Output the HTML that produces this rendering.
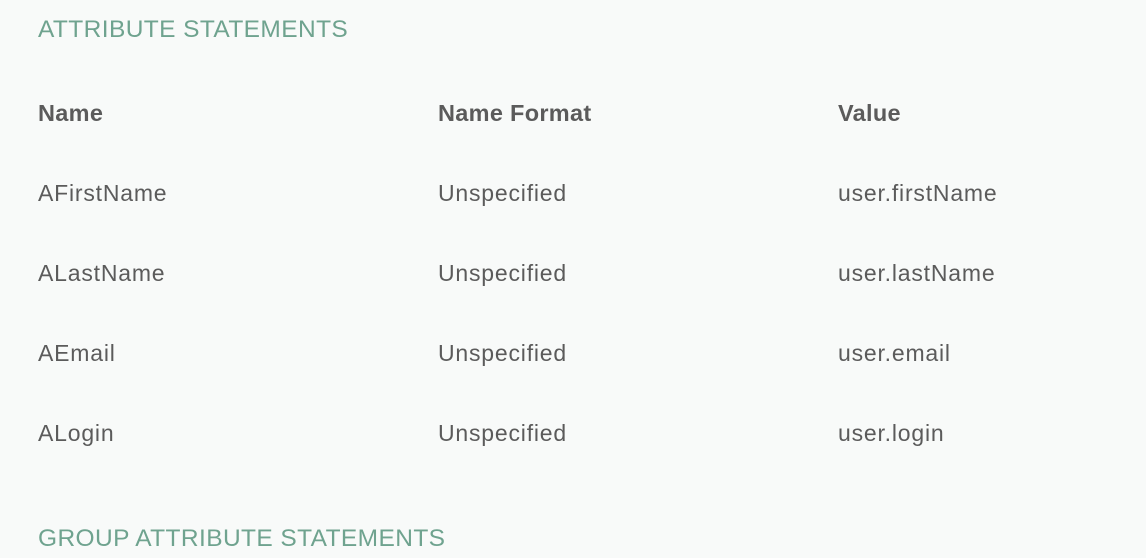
<!DOCTYPE html>
<html><head><meta charset="utf-8"><style>
html,body{margin:0;padding:0;background:#f8faf9;width:1146px;height:558px;overflow:hidden;font-family:"Liberation Sans",sans-serif;}
.h{position:absolute;left:38px;color:#6fa38f;font-size:24.5px;letter-spacing:0.4px;line-height:1;}
.t{position:absolute;font-size:23px;color:#5b5b5b;line-height:1;letter-spacing:0.8px;}
.b{font-weight:bold;font-size:23.5px;letter-spacing:0.3px;}
</style></head><body>
<div class="h" style="top:18px">ATTRIBUTE STATEMENTS</div>
<div class="t b" style="left:38px;top:102px">Name</div>
<div class="t b" style="left:438px;top:102px">Name Format</div>
<div class="t b" style="left:838px;top:102px">Value</div>

<div class="t" style="left:38px;top:182px">AFirstName</div>
<div class="t" style="left:438px;top:182px">Unspecified</div>
<div class="t" style="left:838px;top:182px">user.firstName</div>

<div class="t" style="left:38px;top:262px">ALastName</div>
<div class="t" style="left:438px;top:262px">Unspecified</div>
<div class="t" style="left:838px;top:262px">user.lastName</div>

<div class="t" style="left:38px;top:342px">AEmail</div>
<div class="t" style="left:438px;top:342px">Unspecified</div>
<div class="t" style="left:838px;top:342px">user.email</div>

<div class="t" style="left:38px;top:422px">ALogin</div>
<div class="t" style="left:438px;top:422px">Unspecified</div>
<div class="t" style="left:838px;top:422px">user.login</div>

<div class="h" style="top:527px">GROUP ATTRIBUTE STATEMENTS</div>
</body></html>
